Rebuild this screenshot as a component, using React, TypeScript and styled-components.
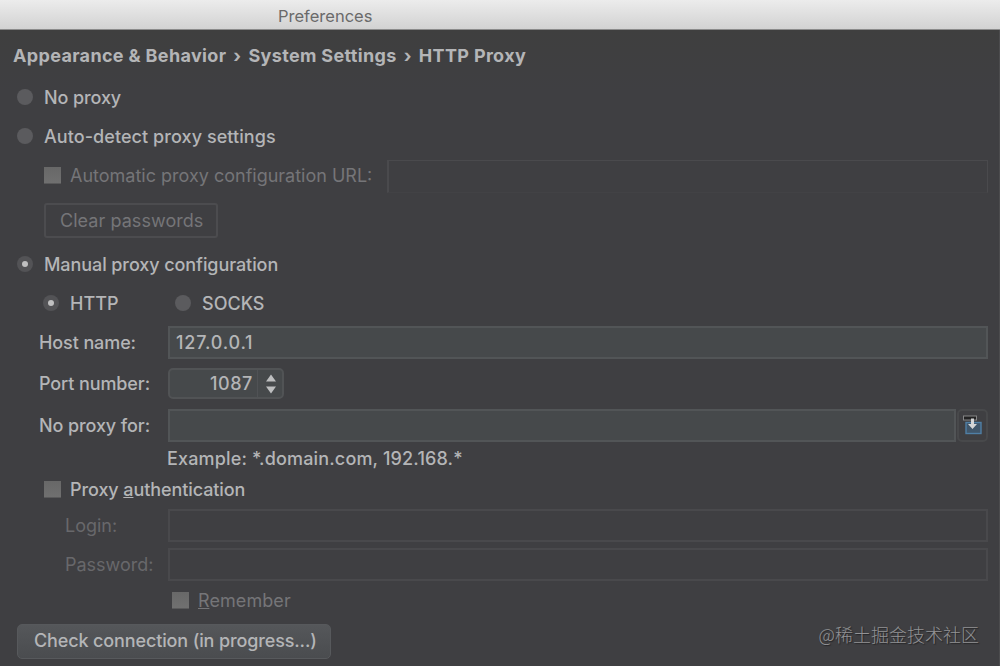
import React, { FunctionComponent } from 'react';
import styled, { createGlobalStyle } from 'styled-components';

const GlobalStyle = createGlobalStyle`
  * {
    box-sizing: border-box;
  }
  body {
    margin: 0;
    background: #3f3f42;
  }
`;

const colors = {
  text: '#b4b5b7',
  disabled: '#757578',
  faint: '#68686b',
  border: '#525557',
  borderDisabled: '#49494c',
};

const S = {
  Window: styled.div`
    width: 1000px;
    height: 666px;
    display: flex;
    flex-direction: column;
    overflow: hidden;
    position: relative;
    color: ${colors.text};
    font-family: Inter, 'Liberation Sans', sans-serif;
    font-size: 18px;
    font-weight: 500;
    line-height: 24px;
    white-space: nowrap;
  `,
  TitleBar: styled.header`
    height: 30px;
    flex: none;
    padding: 4px 0 0 278px;
    background: linear-gradient(#ececec, #d2d2d2);
    border-bottom: 1px solid #8b8b8b;
    color: #6a6a6a;
    font-size: 16.5px;
    font-weight: 400;
  `,
  Body: styled.main`
    flex: 1;
    background: linear-gradient(#3f3f3f, #3f3f42 60px);
    border-right: 1px solid #4c4c4e;
  `,
  Breadcrumb: styled.nav`
    display: flex;
    gap: 7px;
    height: 48px;
    padding: 14px 0 0 13px;
    font-size: 18px;
    font-weight: 700;
    letter-spacing: 0.34px;
  `,
  Row: styled.div<{ $height: number; $indent?: number }>`
    display: flex;
    align-items: center;
    flex: none;
    height: ${({ $height }) => $height}px;
    padding-left: ${({ $indent = 0 }) => $indent}px;
    padding-right: 11px;
  `,
  Text: styled.span<{ $spacing?: number; $tone?: 'disabled' | 'faint' }>`
    letter-spacing: ${({ $spacing = 0 }) => $spacing}px;
    color: ${({ $tone }) => ($tone ? colors[$tone] : 'inherit')};
    font-weight: ${({ $tone }) => ($tone ? 400 : 500)};
  `,
  FieldLabel: styled.label<{ $indent: number }>`
    width: 168px;
    flex: none;
    padding-top: 1px;
    padding-left: ${({ $indent }) => $indent}px;
  `,
  Radio: styled.span<{ $checked?: boolean }>`
    display: flex;
    align-items: center;
    justify-content: center;
    flex: none;
    width: 16px;
    height: 16px;
    margin: -2px 11px 0 0;
    border-radius: 50%;
    background: ${({ $checked }) => ($checked ? '#535356' : '#5b5b5e')};
    &::after {
      content: '';
      width: 6px;
      height: 6px;
      border-radius: 50%;
      background: ${({ $checked }) => ($checked ? '#c0c0c1' : 'transparent')};
    }
  `,
  RadioOption: styled.div<{ $width?: number }>`
    display: flex;
    align-items: center;
    width: ${({ $width }) => ($width ? `${$width}px` : 'auto')};
  `,
  Checkbox: styled.span`
    flex: none;
    width: 17px;
    height: 17px;
    margin: -1px 9px 0 0;
    background: linear-gradient(#686868, #707070);
    border-bottom: 1px solid #59595a;
  `,
  Input: styled.div<{ $disabled?: boolean }>`
    flex: 1;
    height: 33px;
    padding: 4px 6px;
    border: 2px solid ${({ $disabled }) => ($disabled ? colors.borderDisabled : colors.border)};
    background: ${({ $disabled }) => ($disabled ? 'transparent' : '#46494b')};
    line-height: 22px;
  `,
  UrlInput: styled.div`
    flex: 1;
    height: 33px;
    margin-left: 15px;
    border: 1px solid #4a4a4d;
    border-left-width: 2px;
    border-bottom-color: #424245;
  `,
  Spinner: styled.div`
    display: flex;
    width: 116px;
    height: 31px;
    border: 2px solid #515355;
    border-radius: 5px;
    background: #46494b;
  `,
  SpinnerValue: styled.span`
    width: 88px;
    padding-right: 4px;
    text-align: right;
    line-height: 28px;
    border-right: 1px solid #505255;
  `,
  SpinnerArrows: styled.svg`
    margin: 4px 0 0 7px;
  `,
  IconButton: styled.span`
    display: flex;
    align-items: center;
    justify-content: center;
    width: 31px;
    height: 33px;
    margin-left: 1px;
    border: 2px solid #48494b;
    border-radius: 5px;
  `,
  ClearButton: styled.span`
    width: 174px;
    height: 35px;
    border: 2px solid #4c4c4f;
    border-radius: 3px;
    padding: 4px 0 0 14px;
  `,
  CheckButton: styled.span`
    width: 314px;
    height: 35px;
    padding: 4px 0 0 16px;
    border: 1px solid #57595c;
    border-radius: 5px;
    background: linear-gradient(#55575a, #4a4c4f);
  `,
  Watermark: styled.span`
    position: absolute;
    right: 21px;
    bottom: 19px;
    color: #929294;
    font-family: 'Noto Sans CJK SC', sans-serif;
    font-size: 18px;
    font-weight: 300;
    line-height: 26px;
    text-shadow: 1px 1px 1px #242426;
  `,
};

const Arrows = () => (
  <S.SpinnerArrows width="12" height="20" viewBox="0 0 12 20" fill="#bdbebf">
    <path d="M6 .5l5 7H1zM6 19.5l5-7H1z" />
  </S.SpinnerArrows>
);

const ExpandIcon = () => (
  <svg width="20" height="20" viewBox="0 0 20 20" fill="none">
    <rect x="3" y="7.5" width="15" height="11" fill="#40566a" stroke="#4f7fa5" strokeWidth="1.4" />
    <rect x="0.5" y="1" width="13" height="4" fill="#222223" stroke="#858586" />
    <path d="M8 3.5h3V9h3l-4.5 5L5 9h3z" fill="#d4d5d6" />
  </svg>
);

const App: FunctionComponent = () => (
  <>
    <GlobalStyle />
    <S.Window>
      <S.TitleBar>Preferences</S.TitleBar>
      <S.Body>
        <S.Breadcrumb>
          <span>Appearance &amp; Behavior</span>
          <span>›</span>
          <span>System Settings</span>
          <span>›</span>
          <span>HTTP Proxy</span>
        </S.Breadcrumb>

        <S.Row $height={39} $indent={17}>
          <S.Radio />
          <S.Text $spacing={-0.1}>No proxy</S.Text>
        </S.Row>
        <S.Row $height={39} $indent={17}>
          <S.Radio />
          <S.Text $spacing={0.07}>Auto-detect proxy settings</S.Text>
        </S.Row>
        <S.Row $height={40} $indent={44}>
          <S.Checkbox />
          <S.Text $tone="disabled">Automatic proxy configuration URL:</S.Text>
          <S.UrlInput />
        </S.Row>
        <S.Row $height={49} $indent={44}>
          <S.ClearButton>
            <S.Text $tone="disabled" $spacing={0.05}>
              Clear passwords
            </S.Text>
          </S.ClearButton>
        </S.Row>

        <S.Row $height={39} $indent={17}>
          <S.Radio $checked />
          <S.Text $spacing={-0.08}>Manual proxy configuration</S.Text>
        </S.Row>
        <S.Row $height={39} $indent={43}>
          <S.RadioOption $width={132}>
            <S.Radio $checked />
            <S.Text>HTTP</S.Text>
          </S.RadioOption>
          <S.RadioOption>
            <S.Radio />
            <S.Text>SOCKS</S.Text>
          </S.RadioOption>
        </S.Row>
        <S.Row $height={39}>
          <S.FieldLabel $indent={39}>
            <S.Text $spacing={-0.1}>Host name:</S.Text>
          </S.FieldLabel>
          <S.Input>
            <S.Text $spacing={0.8}>127.0.0.1</S.Text>
          </S.Input>
        </S.Row>
        <S.Row $height={42}>
          <S.FieldLabel $indent={39}>
            <S.Text $spacing={-0.1}>Port number:</S.Text>
          </S.FieldLabel>
          <S.Spinner>
            <S.SpinnerValue>
              <S.Text $spacing={0.6}>1087</S.Text>
            </S.SpinnerValue>
            <Arrows />
          </S.Spinner>
        </S.Row>
        <S.Row $height={42}>
          <S.FieldLabel $indent={39}>
            <S.Text $spacing={-0.1}>No proxy for:</S.Text>
          </S.FieldLabel>
          <S.Input />
          <S.IconButton>
            <ExpandIcon />
          </S.IconButton>
        </S.Row>
        <S.Row $height={26} $indent={167}>
          <S.Text $spacing={0.16}>Example: *.domain.com, 192.168.*</S.Text>
        </S.Row>

        <S.Row $height={35} $indent={44}>
          <S.Checkbox />
          <S.Text $spacing={-0.09}>
            Proxy <u>a</u>uthentication
          </S.Text>
        </S.Row>
        <S.Row $height={36}>
          <S.FieldLabel $indent={65}>
            <S.Text $tone="faint">Login:</S.Text>
          </S.FieldLabel>
          <S.Input $disabled />
        </S.Row>
        <S.Row $height={42}>
          <S.FieldLabel $indent={65}>
            <S.Text $tone="faint">Password:</S.Text>
          </S.FieldLabel>
          <S.Input $disabled />
        </S.Row>
        <S.Row $height={31} $indent={172}>
          <S.Checkbox />
          <S.Text $tone="disabled" $spacing={0.08}>
            <u>R</u>emember
          </S.Text>
        </S.Row>
        <S.Row $height={50} $indent={17}>
          <S.CheckButton>
            <S.Text $spacing={-0.13}>Check connection (in progress...)</S.Text>
          </S.CheckButton>
        </S.Row>
      </S.Body>
      <S.Watermark>@稀土掘金技术社区</S.Watermark>
    </S.Window>
  </>
);

export default App;
